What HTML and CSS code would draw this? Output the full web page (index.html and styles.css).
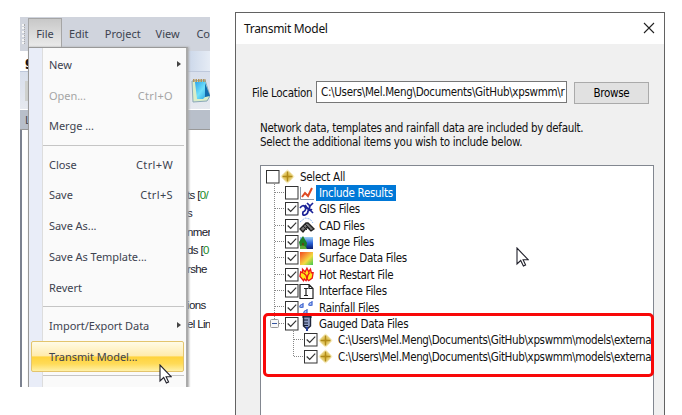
FILE: index.html
```html
<!DOCTYPE html>
<html lang="en">
<head>
<meta charset="utf-8">
<title>Transmit Model</title>
<link rel="stylesheet" href="styles.css">
</head>
<body>
<svg class="defs" width="0" height="0">
  <defs>
    <radialGradient id="glow"><stop offset="0" stop-color="#d0a822"/><stop offset=".55" stop-color="#e6cf78"/><stop offset="1" stop-color="#fff6d0" stop-opacity=".5"/></radialGradient>
    <linearGradient id="surf" x1="0" y1="0" x2="1" y2="1"><stop offset="0" stop-color="#f04a20"/><stop offset=".35" stop-color="#f79a38"/><stop offset=".6" stop-color="#f2dc40"/><stop offset="1" stop-color="#3cc850"/></linearGradient>
    <linearGradient id="sky" x1="0" y1="0" x2="0" y2="1"><stop offset="0" stop-color="#9ed2f5"/><stop offset=".5" stop-color="#2b63d8"/><stop offset="1" stop-color="#0a1c6c"/></linearGradient>
    <linearGradient id="pad" x1="0" y1="0" x2="1" y2="1"><stop offset="0" stop-color="#27a0ea"/><stop offset=".5" stop-color="#6fe0fa"/><stop offset="1" stop-color="#1c97df"/></linearGradient>
    <symbol id="star" viewBox="0 0 15 15"><path d="M7.500 0L11 4l4 3.500-4 3.500-3.500 4L4 11 0 7.500 4 4z" fill="url(#glow)"/><path d="M7.500 2.500v10M2.500 7.500h10" stroke="#b08a18" stroke-width="1.400"/></symbol>
    <symbol id="tick" viewBox="0 0 14 14"><rect x=".5" y=".5" width="12.500" height="12.500" fill="#fff" stroke="#333"/><path d="M2.700 6.500l3 3 5.500-5.800" fill="none" stroke="#333" stroke-width="1.200"/></symbol>
    <symbol id="empty" viewBox="0 0 14 14"><rect x=".5" y=".5" width="12.500" height="12.500" fill="#fff" stroke="#333"/></symbol>
    <symbol id="cursor" viewBox="0 0 13 20"><path d="M1 1v16l3.700-3.500 2.700 5.500 2.200-1-2.500-5.300h5z" fill="#fff" stroke="#22222c" stroke-width="1.100"/></symbol>
  </defs>
</svg>
<main class="stage">
  <section class="app">
    <nav class="menubar"><span class="grip"></span><span class="file">File</span><span class="edit">Edit</span><span class="project">Project</span><span class="view">View</span><span class="conf">Co</span></nav>
    <div class="tabs"><b>g</b></div>
    <div class="toolbar">
      <span class="doc"></span>
      <svg class="notepad" width="19" height="25" viewBox="0 0 19 25"><path d="M1 3l13-1 5 16-3 5-14 1z" fill="#d9edc8" stroke="#8aa8b8"/><path d="M4 4l10-1 4 14-4 2-2 2-6 0z" fill="url(#pad)"/><path d="M14 5l5 13-5 1z" fill="#126bad"/><path d="M2 2.500h13" stroke="#b3945a" stroke-width="3" stroke-dasharray="1.500 1"/></svg>
    </div>
    <div class="caption">L</div>
    <div class="layers">
      <p>ts [<i>0/</i></p><p>s</p><p>nmen</p><p>ds [<i>0</i></p><p>rshe</p><p></p><p>ions</p><p>el Lin</p>
    </div>
    <div class="menu">
      <div class="item"><span>New</span><em class="arrow"></em></div>
      <div class="item off"><span>Open...</span><span>Ctrl+O</span></div>
      <div class="item"><span>Merge ...</span></div>
      <hr>
      <div class="item"><span>Close</span><span>Ctrl+W</span></div>
      <div class="item"><span>Save</span><span>Ctrl+S</span></div>
      <div class="item"><span>Save As...</span></div>
      <div class="item"><span>Save As Template...</span></div>
      <div class="item"><span>Revert</span></div>
      <hr>
      <div class="item"><span>Import/Export Data</span><em class="arrow"></em></div>
      <div class="item hot"><span>Transmit Model...</span></div>
      <hr class="last">
    </div>
    <svg class="cursor one" width="13" height="20"><use href="#cursor"/></svg>
  </section>
  <section class="dialog">
    <header><span>Transmit Model</span><svg width="12" height="12" viewBox="0 0 12 12"><path d="M1 1l10 10M11 1L1 11" stroke="#222" stroke-width="1.100"/></svg></header>
    <div class="location"><label>File Location</label><div class="input"><span>C:\Users\Mel.Meng\Documents\GitHub\xpswmm\r</span></div><button>Browse</button></div>
    <div class="note"><p class="n1">Network data, templates and rainfall data are included by default.</p><p class="n2">Select the additional items you wish to include below.</p></div>
    <div class="tree">
      <div class="row root"><svg class="box"><use href="#empty"/></svg><svg class="icon"><use href="#star"/></svg><span>Select All</span></div>
      <div class="row"><svg class="box"><use href="#empty"/></svg><svg class="icon" viewBox="0 0 15 15"><path d="M1.500 1v12.500H15" fill="none" stroke="#8d99a5"/><path d="M3 11l3-4 3 3 4-8" fill="none" stroke="#df4b24" stroke-width="2"/></svg><span class="sel">Include Results</span></div>
      <div class="row"><svg class="box"><use href="#tick"/></svg><svg class="icon" viewBox="0 0 15 15"><path d="M1 6q3-4 5-1t-2 5q-1 4 2 3t3-4q3-2 4-1M6 3q2 4 5 5l3 3M14 1l-4 4M8 1l3 3-1 4" fill="none" stroke="#1b2398" stroke-width="1.700"/></svg><span>GIS Files</span></div>
      <div class="row"><svg class="box"><use href="#tick"/></svg><svg class="icon" viewBox="0 0 15 15"><path d="M1 4l5-4 5 1 3 4" fill="none" stroke="#90b8ed" stroke-dasharray="2 1"/><path d="M1 11l6-6 2 0 6 6-3 2-4-4-4 5z" fill="#777" stroke="#222" stroke-width="1.300"/><path d="M4 8l4 4M6 6l5 5" stroke="#222"/></svg><span>CAD Files</span></div>
      <div class="row"><svg class="box"><use href="#tick"/></svg><svg class="icon" viewBox="0 0 15 15"><path d="M1 2h13v12H1z" fill="url(#sky)"/><path d="M4 1L0 7l1 5 6 1 1-5z" fill="#1c8126"/><path d="M4 8v5" stroke="#6a3812" stroke-width="1.500"/><path d="M1 11q5-2 7 3H1z" fill="#61a83a"/></svg><span>Image Files</span></div>
      <div class="row"><svg class="box"><use href="#tick"/></svg><svg class="icon" viewBox="0 0 15 15"><path d="M1 1h13v13H1z" fill="url(#surf)"/></svg><span>Surface Data Files</span></div>
      <div class="row"><svg class="box"><use href="#tick"/></svg><svg class="icon flame" viewBox="0 0 17 16"><path d="M5 15L1 10l1-5 2 1V2l3 3 2-4 2 4 2-3 1 4 2 0-1 6-4 3-2-2-1 2-2-2z" fill="#ffe619" stroke="#ed1717" stroke-width="1.500"/><path d="M5 6l3 3 1 4 1-4 2-3" fill="none" stroke="#ed1717" stroke-width="1.500"/></svg><span>Hot Restart File</span></div>
      <div class="row"><svg class="box"><use href="#tick"/></svg><svg class="icon" viewBox="0 0 15 15"><path d="M1 .5h9l4 4v10H1zM10 .5v4h4M5 4.500h4M5 11.500h4M7 4.500v7" fill="#fff" stroke="#222" stroke-width="1.200"/></svg><span>Interface Files</span></div>
      <div class="row"><svg class="box"><use href="#tick"/></svg><svg class="icon" viewBox="0 0 15 15"><g fill="#d8e5ff" stroke="#466bd2" stroke-width="1.300"><path d="M4 3v4q-4 1-3-1 1-2 3-1M13 1v4q-4 1-3-1 1-2 3-1M8 9v4q-4 1-3-1 1-2 3-1"/></g></svg><span>Rainfall Files</span></div>
      <div class="row"><svg class="box"><use href="#tick"/></svg><svg class="icon" viewBox="0 0 15 15"><path d="M4.500 0h7v10l-3.500 3-3.500-3z" fill="#8e9cc4" stroke="#202538" stroke-width="1.400"/><path d="M3 1h10M5 4h4M5 7h4M5 9.500h4" stroke="#111b32" stroke-width="1.200"/><path d="M8 11v4" stroke="#223d9c" stroke-width="2"/></svg><span>Gauged Data Files</span></div>
      <div class="row child"><svg class="box"><use href="#tick"/></svg><svg class="icon"><use href="#star"/></svg><span>C:\Users\Mel.Meng\Documents\GitHub\xpswmm\models\externa</span></div>
      <div class="row child"><svg class="box"><use href="#tick"/></svg><svg class="icon"><use href="#star"/></svg><span>C:\Users\Mel.Meng\Documents\GitHub\xpswmm\models\externa</span></div>
      <svg class="lines" width="60" height="200" viewBox="0 0 60 200"><path d="M13.500 18v135M14 26.500h10M14 42.500h10M14 59.500h10M14 75.500h10M14 91.500h10M14 108.500h10M14 124.500h10M14 140.500h10M18 157.500h6M32.500 165v25M33 173.500h10M33 190.500h10" fill="none" stroke="#888" stroke-dasharray="1 1"/><rect x="9.500" y="153.500" width="8" height="8" rx="1" fill="#f8f8f8" stroke="#999"/><path d="M11 157.500h5" stroke="#3555a0"/></svg>
    </div>
    <div class="outline"></div>
    <svg class="cursor two" width="13" height="20"><use href="#cursor"/></svg>
  </section>
</main>
</body>
</html>
```
FILE: styles.css
```css
* { box-sizing: border-box; }
body { margin: 0; background: #fff; color: #111; overflow: hidden; }
p { margin: 0; }
.defs { position: absolute; }
.stage { display: flex; width: 682px; height: 415px; }
.app { position: relative; width: 190px; height: 370px; margin: 17px 0 0 20px; flex: none; overflow: hidden; font: 11px "Noto Sans", sans-serif; color: #3d4350; }
.menubar { display: flex; height: 34px; align-items: center; background: #d0d4dd; white-space: nowrap; padding-bottom: 1px; letter-spacing: 0; }
.grip { width: 3px; height: 20px; margin: 0 3px 0 2px; border-left: 2px dotted #f6f6f6; border-right: 1px dotted #aaa; }
.file { width: 34px; height: 31px; line-height: 30px; text-align: center; border: 1px solid #a5a5a5; border-bottom: 0; background: linear-gradient(#c8c8c8, #eee); }
.edit { margin-left: 7px; width: 36px; }
.project { width: 51px; }
.view { width: 41px; }
.tabs { height: 20px; padding-left: 5px; background: linear-gradient(90deg, #fff 40%, #cfdaeb 90%, #e6ecf5); font: bold 13px "Noto Sans", sans-serif; color: #111; }
.tabs b { display: block; line-height: 20px; }
.toolbar { height: 38px; display: flex; justify-content: space-between; align-items: center; background: linear-gradient(#d8dfec, #e6e9ef); border-top: 1px solid #bec8db; padding-left: 5px; }
.doc { width: 14px; height: 20px; background: #cfd1ce; }
.caption { height: 21px; padding-left: 5px; line-height: 20px; background: #b8bfca; border-top: 1px solid #fff; border-bottom: 1px solid #999; }
.layers { height: 257px; padding: 56px 0 0 165px; background: #fff; border-left: 2px solid #7c8290; font: 11.5px "Liberation Sans", sans-serif; letter-spacing: -.65px; color: #171729; white-space: nowrap; }
.layers p { height: 18.4px; line-height: 18.4px; }
.layers i { font-style: normal; color: #188923; }
.menu { position: absolute; left: 8px; top: 30px; width: 160px; height: 350px; padding: 1.5px 2px 0; border: 1px solid #999; border-right: 2px solid #aaa; box-shadow: 1px 0 2px #aaa; background: linear-gradient(90deg, #e9edf8 13px, #ddd 13px, #ddd 14px, #fafafa 14px); letter-spacing: -.05px; }
.item { display: flex; justify-content: space-between; align-items: center; height: 30.75px; padding: 0 10px 1px 17px; border: 1px solid transparent; white-space: nowrap; }
.item span + span { letter-spacing: .35px; }
.off { color: #a5a5a5; }
.arrow { border: 3.5px solid transparent; border-left: 4.500px solid #444; border-right: 0; margin-right: -8px; }
.menu hr { height: 1px; margin: 3px 0 3.5px 12px; border: 0; background: #c5c5c5; }
.hot { border: 1px solid #e3c46d; border-radius: 2px; background: linear-gradient(#fffbe6, #ffebad 47%, #ffd33d 52%, #ffdb58 75%, #fff1a8); }
.dialog { position: relative; width: 430px; height: 403px; margin: 12px 0 0 25px; flex: none; border: 1px solid #626262; border-bottom: 0; background: #f0f0f0; font: 11.5px "DejaVu Sans Condensed", sans-serif; letter-spacing: -.3px; }
.dialog header { display: flex; justify-content: space-between; align-items: center; height: 31px; padding: 0 9px 1px 8px; background: #fff; font: 12px "Noto Sans", sans-serif; letter-spacing: -.3px; }
.location { display: flex; height: 24px; margin: 37px 0 0 16px; align-items: flex-start; }
.location label { width: 64px; line-height: 24px; white-space: nowrap; letter-spacing: -.3px; }
.input { width: 251px; height: 22px; padding-left: 4px; border: 1px solid #777; background: #fff; line-height: 21px; white-space: nowrap; letter-spacing: -.3px; }
.input span { display: block; }
.location button { width: 75px; height: 22px; margin: 1px 0 0 7px; padding: 0; border: 1px solid #aaa; background: #e1e1e1; font: inherit; letter-spacing: inherit; }
.note { height: 29px; margin: 17px 0 0 24px; line-height: 13.5px; white-space: nowrap; }
.tree { position: relative; width: 394px; height: 251px; margin: 14px 0 0 24px; padding: 2.6px 0 0 24px; overflow: hidden; border: 1px solid #828790; border-bottom: 0; background: #fff; }
.row { display: flex; height: 16.35px; align-items: center; white-space: nowrap; }
.row .box { width: 14px; height: 14px; flex: none; }
.row .icon { width: 15px; height: 15px; flex: none; overflow: visible; }
.row span { height: 16px; padding: 0 3px; line-height: 16px; margin-left: 2px; }
.row .sel { background: #0078d7; color: #fff; }
.root { margin-left: -19px; }
.child { margin-left: 19px; letter-spacing: -.35px; }
.child span { padding-right: 0; }
.lines { position: absolute; left: 0; top: 0; }
.outline { position: absolute; left: 27px; top: 300px; width: 391px; height: 64px; border: 3px solid #f80808; border-radius: 5px; }
.cursor { position: absolute; }
.one { left: 139px; top: 347px; }
.two { left: 280px; top: 234px; }
```
